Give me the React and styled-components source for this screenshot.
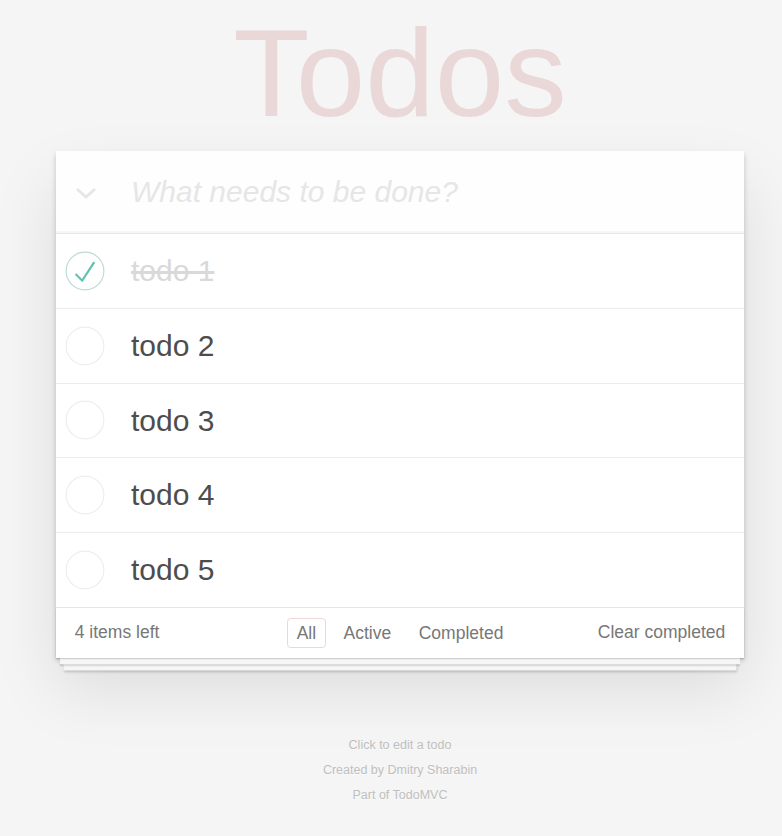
import React from 'react';
import styled, { createGlobalStyle } from 'styled-components';

const todos = [
  { id: 1, title: 'todo 1', completed: true },
  { id: 2, title: 'todo 2', completed: false },
  { id: 3, title: 'todo 3', completed: false },
  { id: 4, title: 'todo 4', completed: false },
  { id: 5, title: 'todo 5', completed: false },
];

const GlobalStyle = createGlobalStyle`
  html, body {
    margin: 0;
    padding: 0;
  }

  body {
    background: #f5f5f5;
    color: #4d4d4d;
    font-family: "Liberation Sans", Arial, sans-serif;
    font-size: 17.5px;
  }
`;

const Page = styled.div`
  width: 688px;
  margin-left: 56px;
`;

const Title = styled.h1`
  margin: 0 0 16px;
  padding-top: 10px;
  height: 125px;
  font-size: 125px;
  line-height: 125px;
  font-weight: 100;
  text-align: center;
  color: rgba(175, 47, 47, 0.15);
`;

const TodoApp = styled.section`
  background: #fff;
  position: relative;
  box-shadow: 0 2.5px 5px 0 rgba(0, 0, 0, 0.2),
    0 31px 62px 0 rgba(0, 0, 0, 0.1);
`;

const Header = styled.header`
  display: flex;
  align-items: center;
  height: 82px;
  background: rgba(0, 0, 0, 0.003);
  box-shadow: inset 0 -2px 1px rgba(0, 0, 0, 0.03);
`;

const ToggleAll = styled.label`
  width: 60px;
  display: flex;
  justify-content: center;
  align-items: center;
  padding-top: 2px;
`;

const NewTodo = styled.input`
  flex: 1;
  height: 42px;
  margin: 0;
  padding: 0 20px 0 15px;
  border: none;
  outline: none;
  background: transparent;
  font-family: inherit;
  font-size: 30px;
  line-height: 42px;
  color: #4d4d4d;

  &::placeholder {
    font-style: italic;
    color: #e6e6e6;
  }
`;

const TodoList = styled.ul`
  margin: 0;
  padding: 0;
  list-style: none;
  border-top: 1px solid #e6e6e6;
`;

const TodoItem = styled.li`
  display: flex;
  align-items: center;
  border-bottom: 1px solid #ededed;

  &:last-child {
    border-bottom: none;
  }
`;

const Toggle = styled.span`
  width: 75px;
  padding-left: 9px;
  box-sizing: border-box;
  display: flex;
  align-items: center;
`;

const Label = styled.label`
  flex: 1;
  padding: 19px 18.75px 18.8px 0;
  font-size: 30px;
  line-height: 36px;
  color: ${(p) => (p.$done ? '#d9d9d9' : '#4d4d4d')};
  text-decoration: ${(p) => (p.$done ? 'line-through' : 'none')};
`;

const Footer = styled.footer`
  position: relative;
  display: grid;
  grid-template-columns: 1fr auto 1fr;
  align-items: center;
  height: 25px;
  padding: 12.5px 18.75px;
  border-top: 1px solid #e6e6e6;
  color: #777;
  font-size: 17.5px;
  line-height: 25px;

  &::before {
    content: '';
    position: absolute;
    right: 0;
    bottom: 0;
    left: 0;
    height: 50px;
    overflow: hidden;
    pointer-events: none;
    box-shadow: 0 1.25px 1.25px rgba(0, 0, 0, 0.2),
      0 10px 0 -3.75px #f6f6f6,
      0 11.25px 1.25px -3.75px rgba(0, 0, 0, 0.2),
      0 20px 0 -7.5px #f6f6f6,
      0 21.25px 2.5px -7.5px rgba(0, 0, 0, 0.2);
  }
`;

const Count = styled.span`
  justify-self: start;
`;

const Filters = styled.ul`
  display: flex;
  align-items: center;
  height: 25px;
  margin: 0;
  padding: 0;
  list-style: none;
`;

const FilterLink = styled.a`
  display: block;
  margin: 0 3.75px;
  padding: 4px 9px;
  line-height: 20px;
  color: inherit;
  text-decoration: none;
  border: 1px solid ${(p) => (p.$selected ? '#efd5d5' : 'transparent')};
  border-radius: 3.75px;
`;

const ClearButton = styled.button`
  justify-self: end;
  margin: 0;
  padding: 0;
  border: none;
  background: none;
  font-family: inherit;
  font-size: 17.5px;
  line-height: 25px;
  color: #777;
  cursor: pointer;
`;

const Info = styled.footer`
  margin-top: 81px;
  text-align: center;
  color: #bfbfbf;
  font-size: 12.5px;
  text-shadow: 0 1px 0 rgba(255, 255, 255, 0.5);

  > p {
    margin: 12.5px 0;
    line-height: 1;
  }
`;

const Chevron = () => (
  <svg width="22" height="12" viewBox="0 0 22 12">
    <polyline
      points="2,2 11,10 20,2"
      fill="none"
      stroke="#e6e6e6"
      strokeWidth="3"
    />
  </svg>
);

const CheckCircle = ({ checked }) => (
  <svg width="40" height="40" viewBox="-3 -3 106 106">
    <circle
      cx="50"
      cy="50"
      r="50"
      fill="none"
      stroke={checked ? '#bddad5' : '#ededed'}
      strokeWidth="3"
    />
    {checked && (
      <path fill="#5dc2af" d="M72 25L42 71 27 56l-4 4 20 20 34-52z" />
    )}
  </svg>
);

const App = () => {
  const left = todos.filter((t) => !t.completed).length;

  return (
    <>
      <GlobalStyle />
      <Page>
        <Title>Todos</Title>
        <TodoApp>
          <Header>
            <ToggleAll>
              <Chevron />
            </ToggleAll>
            <NewTodo placeholder="What needs to be done?" />
          </Header>
          <TodoList>
            {todos.map((todo) => (
              <TodoItem key={todo.id}>
                <Toggle>
                  <CheckCircle checked={todo.completed} />
                </Toggle>
                <Label $done={todo.completed}>{todo.title}</Label>
              </TodoItem>
            ))}
          </TodoList>
          <Footer>
            <Count>{left} items left</Count>
            <Filters>
              <li>
                <FilterLink href="#/" $selected>
                  All
                </FilterLink>
              </li>
              <li>
                <FilterLink href="#/active">Active</FilterLink>
              </li>
              <li>
                <FilterLink href="#/completed">Completed</FilterLink>
              </li>
            </Filters>
            <ClearButton>Clear completed</ClearButton>
          </Footer>
        </TodoApp>
        <Info>
          <p>Click to edit a todo</p>
          <p>Created by Dmitry Sharabin</p>
          <p>Part of TodoMVC</p>
        </Info>
      </Page>
    </>
  );
};

export default App;
